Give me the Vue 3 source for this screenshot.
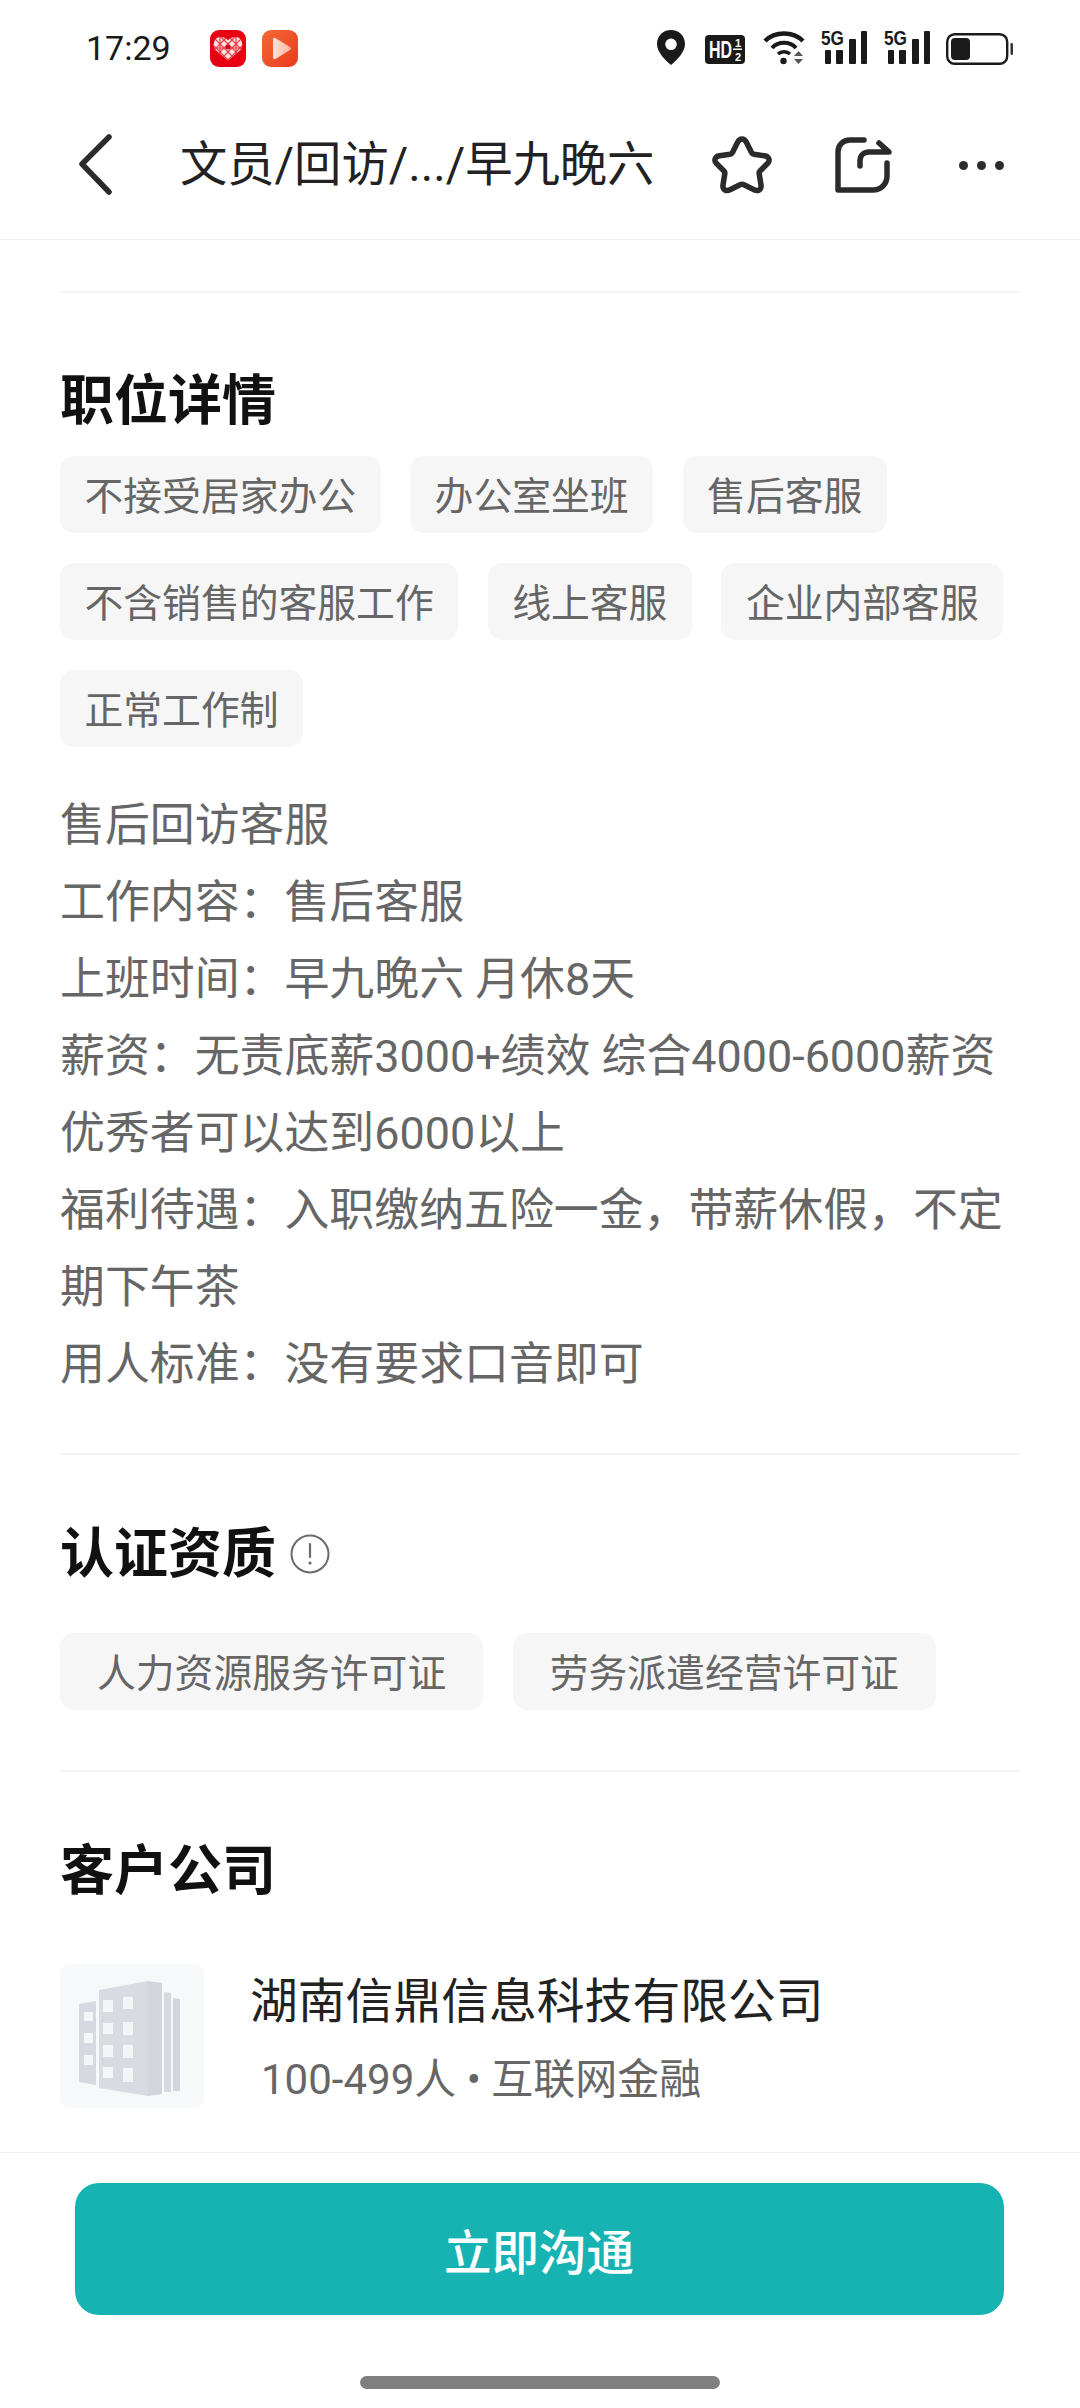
<template>
  <div class="page">
    <!-- status bar -->
    <div class="status-bar">
      <span class="time">17:29</span>
      <div class="app-icon pdd">
        <svg width="36" height="37" viewBox="0 0 36 37">
          <defs>
            <clipPath id="heart-clip">
              <path d="M18 30.500 L5.500 20 C1.800 15 4 7 10.500 7 C14 7 16.500 8.500 18 10.500 C19.500 8.500 22 7 25.500 7 C32 7 34.200 15 30.500 20 Z" />
            </clipPath>
          </defs>
          <path d="M18 30.500 L5.500 20 C1.800 15 4 7 10.500 7 C14 7 16.500 8.500 18 10.500 C19.500 8.500 22 7 25.500 7 C32 7 34.200 15 30.500 20 Z" fill="#fbe3e3" />
          <g clip-path="url(#heart-clip)" stroke="#e8343f" stroke-width="1.200" fill="none">
            <path d="M0 12 L24 36 M0 4 L32 36 M6 2 L36 32 M14 2 L36 24 M36 12 L12 36 M36 4 L4 36 M30 2 L0 32 M22 2 L0 24" />
            <path d="M10 7 L10 30 M26 7 L26 30 M3 18 L33 18" />
          </g>
          <circle cx="18" cy="17" r="2.500" fill="#c70d1a" />
        </svg>
      </div>
      <div class="app-icon video">
        <svg width="36" height="37" viewBox="0 0 36 37">
          <defs>
            <linearGradient id="play-fill" x1="0" y1="0" x2="1" y2="0">
              <stop offset="0" stop-color="#ffe2da" />
              <stop offset="1" stop-color="#ffb29c" />
            </linearGradient>
          </defs>
          <path d="M11 9.500 C11 8 12.500 7.500 13.500 8 L28 17 C29.300 17.800 29.300 19.200 28 20 L13.500 29 C12.500 29.500 11 29 11 27.500 Z" fill="url(#play-fill)" />
        </svg>
      </div>
      <div class="status-icons">
        <svg width="28" height="35" viewBox="0 0 28 35">
          <path fill-rule="evenodd" d="M14 0 C6 0 0 6 0 14 C0 22 8 30 14 35 C20 30 28 22 28 14 C28 6 22 0 14 0 Z M14 8.500 A5.800 5.800 0 1 1 14 20.100 A5.800 5.800 0 1 1 14 8.500 Z" fill="#1a1a1a" />
        </svg>
        <svg class="hd" width="40" height="29" viewBox="0 0 40 29">
          <rect width="40" height="29" rx="4" fill="#1a1a1a" />
          <text class="hd-text" transform="translate(4 23) scale(0.8 1.2)">HD</text>
          <text x="30" y="11.500" class="hd-small">1</text>
          <rect x="28" y="13.500" width="9" height="1.500" fill="#fff" />
          <text x="30" y="25.500" class="hd-small">2</text>
        </svg>
        <svg class="wifi" width="45" height="35" viewBox="0 0 45 35">
          <path d="M2 11 C12 1 30 1 40 11" fill="none" stroke="#1a1a1a" stroke-width="4.500" />
          <path d="M9 18 C15 11 27 11 33 18" fill="none" stroke="#1a1a1a" stroke-width="4" />
          <path d="M15 24 C18 21 24 21 27 24" fill="none" stroke="#1a1a1a" stroke-width="3.500" />
          <circle cx="20.500" cy="31" r="3.200" fill="#1a1a1a" />
          <path d="M35.500 21 L40 26 L31 26 Z M31 29 L40 29 L35.500 34 Z" fill="#555" />
        </svg>
        <svg v-for="n in 2" :key="n" class="signal" width="46" height="40" viewBox="0 -6 46 40">
          <text x="0" y="15" class="five-g" textLength="23" lengthAdjust="spacingAndGlyphs">5G</text>
          <rect x="4" y="20" width="6" height="14" rx="1" fill="#1a1a1a" />
          <rect x="15" y="20" width="7" height="14" rx="1" fill="#1a1a1a" />
          <rect x="28" y="9" width="7" height="25" rx="1" fill="#1a1a1a" />
          <rect x="40" y="1" width="6" height="33" rx="1" fill="#1a1a1a" />
        </svg>
        <svg class="battery" width="67" height="32" viewBox="0 0 67 32">
          <rect x="1.200" y="1.200" width="60" height="29.600" rx="7.500" fill="none" stroke="#1a1a1a" stroke-width="2.400" />
          <rect x="5" y="5" width="19" height="22" rx="4" fill="#1a1a1a" />
          <rect x="64.500" y="10" width="2.500" height="12" rx="1.200" fill="#333" />
        </svg>
      </div>
    </div>

    <!-- nav bar -->
    <div class="nav-bar">
      <svg class="back" width="34" height="62" viewBox="0 0 34 62">
        <path d="M31 3 L4 30 L31 58" fill="none" stroke="#2b2b2b" stroke-width="5.500" stroke-linecap="round" stroke-linejoin="round" />
      </svg>
      <span class="nav-title">文员/回访/.../早九晚六</span>
      <svg class="star" width="62" height="60" viewBox="0 0 62 60">
        <path d="M31 4 C33 4 34.500 5.500 35.500 7.500 L40.500 17.500 C41 18.500 42 19 43 19.200 L53.500 20.800 C58 21.500 59.500 25.500 56.500 28.500 L49 36 C48.300 36.700 48 37.800 48.200 38.800 L50 50 C50.700 54.500 47 56.800 43 54.800 L33 49.800 C31.700 49.200 30.300 49.200 29 49.800 L19 54.800 C15 56.800 11.300 54.500 12 50 L13.800 38.800 C14 37.800 13.700 36.700 13 36 L5.500 28.500 C2.500 25.500 4 21.500 8.500 20.800 L19 19.200 C20 19 21 18.500 21.500 17.500 L26.500 7.500 C27.500 5.500 29 4 31 4 Z" fill="none" stroke="#2b2b2b" stroke-width="5.500" stroke-linejoin="round" />
      </svg>
      <svg class="share" width="58" height="56" viewBox="0 0 58 56">
        <path d="M29 3 L15 3 C8 3 3 8 3 15 L3 53 L38 53 C46 53 52 47 52 39 L52 26" fill="none" stroke="#2b2b2b" stroke-width="5.500" stroke-linecap="round" stroke-linejoin="round" />
        <path d="M25 29 L25 24 C25 18 29 15 34 15 L54 15 L44 6" fill="none" stroke="#2b2b2b" stroke-width="5.500" stroke-linecap="round" stroke-linejoin="round" />
      </svg>
      <div class="dots">
        <i></i><i></i><i></i>
      </div>
    </div>

    <div class="content">
      <section class="detail">
        <h2>职位详情</h2>
        <div class="tags">
          <span v-for="tag in detailTags" :key="tag" class="tag">{{ tag }}</span>
        </div>
        <div class="desc">
          <p v-for="line in descLines" :key="line">{{ line }}</p>
        </div>
      </section>

      <section class="cert">
        <div class="cert-head">
          <h2>认证资质</h2>
          <svg width="40" height="40" viewBox="0 0 40 40">
            <circle cx="20" cy="20" r="18.500" fill="none" stroke="#6b6b6b" stroke-width="2" />
            <path d="M20 10 L20 23" stroke="#6b6b6b" stroke-width="2.200" stroke-linecap="round" />
            <circle cx="20" cy="29" r="1.600" fill="#6b6b6b" />
          </svg>
        </div>
        <div class="tags cert-tags">
          <span v-for="tag in certTags" :key="tag" class="tag wide">{{ tag }}</span>
        </div>
      </section>

      <section class="company">
        <h2>客户公司</h2>
        <div class="company-row">
          <div class="logo">
            <svg width="144" height="144" viewBox="0 0 144 144">
              <path d="M19 40 L36 37 L36 121 L19 118 Z" fill="#d6d9e0" />
              <path d="M39 26 L88 17 L88 132 L39 124 Z" fill="#d8dbe2" />
              <path d="M88 17 L102 19 L102 130 L88 132 Z" fill="#d2d5dc" />
              <path d="M104 28 L111 29 L111 128 L104 128 Z" fill="#d6d9e0" />
              <path d="M113 34 L120 35 L120 127 L113 127 Z" fill="#d2d5dc" />
              <rect v-for="(w, i) in windows" :key="i" :x="w[0]" :y="w[1]" :width="w[2]" :height="w[3]" fill="#f4f5f7" />
            </svg>
          </div>
          <div class="company-info">
            <div class="company-name">湖南信鼎信息科技有限公司</div>
            <div class="company-meta">100-499人 • 互联网金融</div>
          </div>
        </div>
      </section>
    </div>

    <div class="footer">
      <button class="chat-btn">立即沟通</button>
      <div class="home-bar"></div>
    </div>
  </div>
</template>

<script setup>
const detailTags = [
  '不接受居家办公',
  '办公室坐班',
  '售后客服',
  '不含销售的客服工作',
  '线上客服',
  '企业内部客服',
  '正常工作制'
]

const descLines = [
  '售后回访客服',
  '工作内容：售后客服',
  '上班时间：早九晚六 月休8天',
  '薪资：无责底薪3000+绩效 综合4000-6000薪资优秀者可以达到6000以上',
  '福利待遇：入职缴纳五险一金，带薪休假，不定期下午茶',
  '用人标准：没有要求口音即可'
]

const certTags = ['人力资源服务许可证', '劳务派遣经营许可证']

// building placeholder windows: x, y, w, h
const windows = [
  [24, 48, 9, 9], [24, 69, 9, 10], [24, 91, 9, 10],
  [43, 36, 10, 12], [43, 59, 10, 11], [43, 81, 10, 12], [43, 103, 10, 11],
  [63, 33, 10, 12], [63, 58, 10, 13], [63, 81, 10, 13], [63, 104, 10, 14]
]
</script>

<style>
html, body {
  margin: 0;
  background: #fff;
}
</style>

<style scoped>
.page {
  width: 1080px;
  height: 2408px;
  display: flex;
  flex-direction: column;
  overflow: hidden;
  background: #fff;
  font-family: Roboto, "Noto Sans CJK SC", sans-serif;
  color: #222;
}

.status-bar {
  height: 98px;
  box-sizing: border-box;
  padding: 30px 67px 0 86px;
  display: flex;
  align-items: flex-start;
}

.time {
  font-size: 34px;
  line-height: 37px;
  width: 124px;
  color: #1a1a1a;
}

.app-icon {
  width: 36px;
  height: 37px;
  border-radius: 9px;
  margin-right: 16px;
}

.pdd {
  background: #e60012;
}

.video {
  background: linear-gradient(135deg, #f36a35, #ea3a1e);
}

.status-icons {
  margin-left: auto;
  display: flex;
  align-items: flex-start;
}

.hd {
  margin: 5px 0 0 20px;
}

.wifi {
  margin-left: 18px;
}

.signal {
  margin: -6px 0 0 13px;
}

.signal + .signal {
  margin-left: 17px;
}

.battery {
  margin: 3px 0 0 16px;
}

.hd-text {
  font: 700 20px "Liberation Sans", sans-serif;
  fill: #fff;
}

.hd-small {
  font: 700 11px "Liberation Sans", sans-serif;
  fill: #fff;
}

.five-g {
  font: 700 20px "Liberation Sans", sans-serif;
  fill: #1a1a1a;
}

.nav-bar {
  height: 142px;
  box-sizing: border-box;
  border-bottom: 1px solid #f0f0f0;
  padding-bottom: 7px;
  display: flex;
  align-items: center;
}

.back {
  margin-left: 78px;
}

.nav-title {
  margin-left: 68px;
  font-size: 47.300px;
  line-height: 60px;
  color: #222;
  white-space: nowrap;
}

.star {
  margin-left: 57px;
}

.share {
  margin-left: 62px;
}

.dots {
  margin-left: 66px;
  display: flex;
  gap: 9px;
}

.dots i {
  width: 9px;
  height: 9px;
  border-radius: 50%;
  background: #2b2b2b;
}

.content {
  flex: 1;
  padding: 0 60px;
}

section {
  border-top: 2px solid #f3f3f3;
}

.detail {
  margin-top: 51px;
  padding-top: 71px;
  padding-bottom: 50px;
}

h2 {
  margin: 0;
  font-size: 54px;
  line-height: 76px;
  font-weight: 700;
  color: #111;
}

.tags {
  display: flex;
  flex-wrap: wrap;
  gap: 30px 29.500px;
  margin-top: 16px;
}

.tag {
  height: 77px;
  line-height: 81px;
  padding: 0 24.500px;
  border-radius: 14px;
  background: #f6f6f6;
  font-size: 38.800px;
  color: #666;
}

.tag.wide {
  padding: 0 37px;
}

.desc {
  margin-top: 40px;
  font-size: 44.900px;
  line-height: 77px;
  color: #666;
}

.desc p {
  margin: 0;
}

.cert {
  padding-top: 62px;
  padding-bottom: 60px;
}

.cert-head {
  display: flex;
  align-items: center;
  gap: 14px;
}

.cert-head svg {
  margin-top: -2px;
}

.tags.cert-tags {
  margin-top: 40px;
}

.company {
  padding-top: 62px;
}

.company-row {
  display: flex;
  margin-top: 54px;
}

.logo {
  width: 144px;
  height: 144px;
  border-radius: 10px;
  background: #f7f8f9;
}

.company-info {
  margin-left: 46px;
}

.company-name {
  margin-top: 8px;
  font-size: 47.800px;
  line-height: 60px;
  color: #222;
}

.company-meta {
  margin: 18px 0 0 11px;
  font-size: 42px;
  line-height: 60px;
  color: #666;
}

.footer {
  height: 256px;
  box-sizing: border-box;
  border-top: 1px solid #f0f0f0;
  padding: 30px 2px 0 0;
  display: flex;
  flex-direction: column;
  align-items: center;
}

.chat-btn {
  width: 929px;
  height: 132px;
  border: 0;
  border-radius: 24px;
  background: #17b3b3;
  color: #fff;
  font-family: inherit;
  font-size: 47.500px;
  font-weight: 500;
}

.home-bar {
  width: 360px;
  height: 13px;
  margin: 61px 0 0 2px;
  border-radius: 7px;
  background: #808080;
}
</style>
